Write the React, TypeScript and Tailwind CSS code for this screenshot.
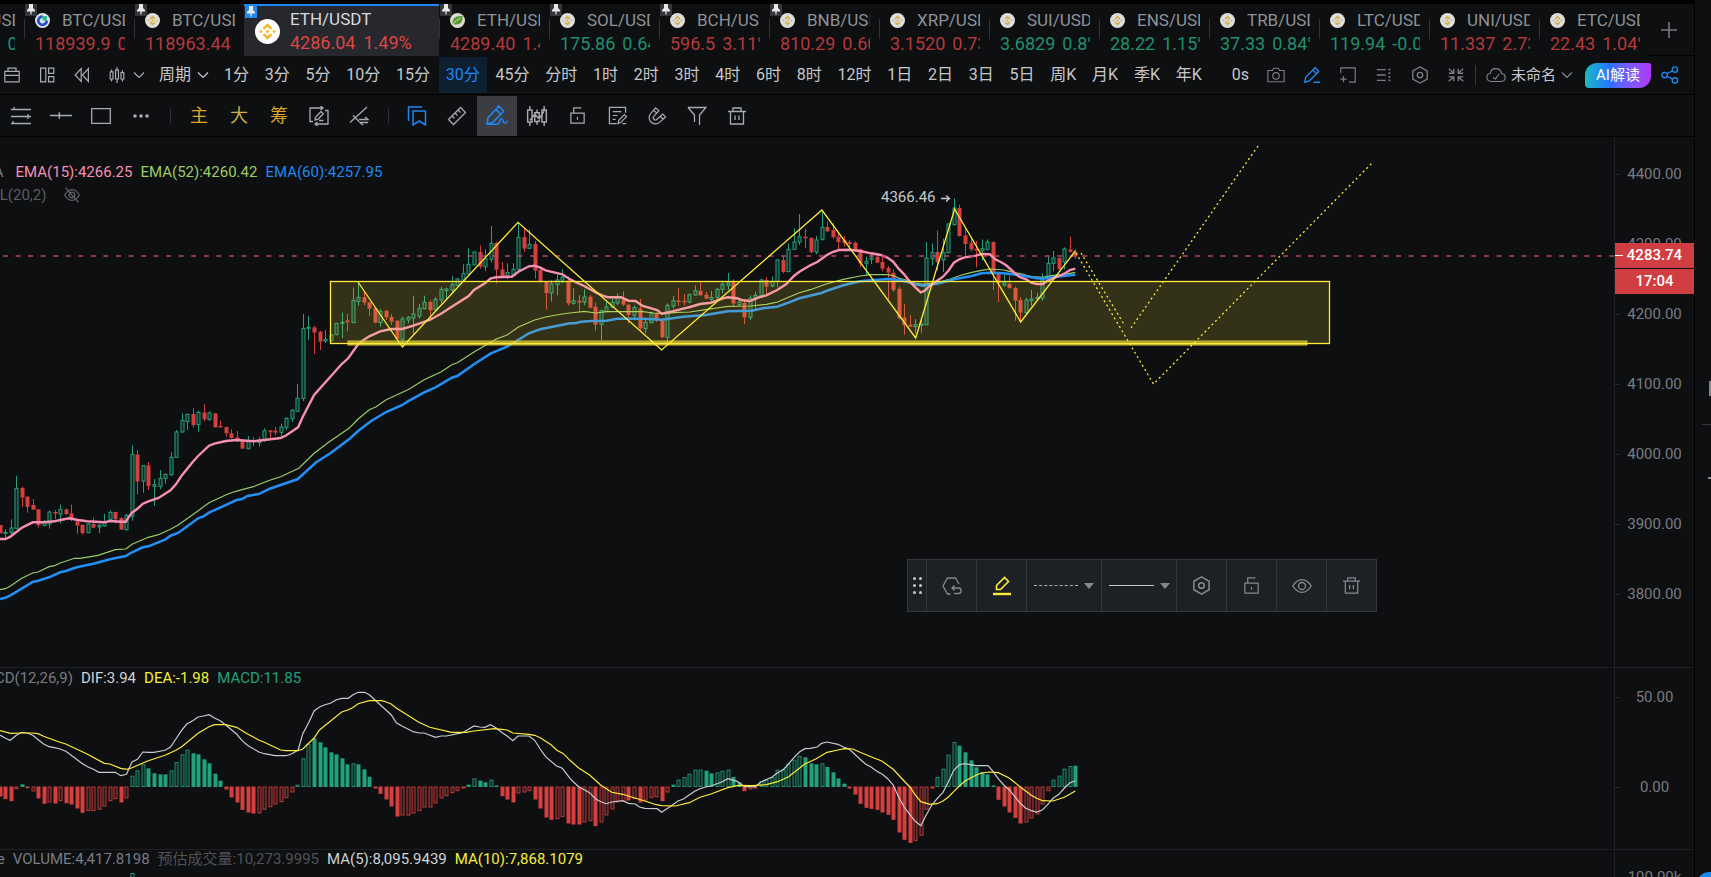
import clsx from 'clsx';
import type { ReactElement, ReactNode } from 'react';

type Tab = {
    name: string;
    price: string;
    change?: string;
    up?: boolean;
    pinned?: boolean;
    active?: boolean;
    exchange?: 'binance' | 'gate' | 'leaf';
};

const TABS: Tab[] = [
    { name: 'BTC/USDT', price: '118902.1', change: '0.52%', up: true },
    { name: 'BTC/USDT', price: '118939.9', change: '0.51%', pinned: true, exchange: 'gate' },
    { name: 'BTC/USDT', price: '118963.44', pinned: true },
    { name: 'ETH/USDT', price: '4286.04', change: '1.49%', pinned: true, active: true },
    { name: 'ETH/USDT', price: '4289.40', change: '1.47%', pinned: true, exchange: 'leaf' },
    { name: 'SOL/USDT', price: '175.86', change: '0.64%', up: true, pinned: true },
    { name: 'BCH/USDT', price: '596.5', change: '3.11%', pinned: true },
    { name: 'BNB/USDT', price: '810.29', change: '0.60%', pinned: true },
    { name: 'XRP/USDT', price: '3.1520', change: '0.73%' },
    { name: 'SUI/USDT', price: '3.6829', change: '0.8%', up: true },
    { name: 'ENS/USDT', price: '28.22', change: '1.15%', up: true },
    { name: 'TRB/USDT', price: '37.33', change: '0.84%', up: true },
    { name: 'LTC/USDT', price: '119.94', change: '-0.06%', up: true },
    { name: 'UNI/USDT', price: '11.337', change: '2.73%' },
    { name: 'ETC/USDT', price: '22.43', change: '1.04%' }
];

const FRAMES = [
    '1分', '3分', '5分', '10分', '15分', '30分', '45分', '分时', '1时', '2时', '3时', '4时',
    '6时', '8时', '12时', '1日', '2日', '3日', '5日', '周K', '月K', '季K', '年K'
];

const PRICE_TICKS = ['4400.00', '4300.00', '4200.00', '4100.00', '4000.00', '3900.00', '3800.00'];

const RED = '#d5403f';
const GREEN = '#22a27c';
const YELLOW = '#ffeb3b';

// Series are stored on a fine grid: GRID_X / GRID_Y steps per pixel.
const GRID_X = 2.751;
const GRID_Y = 3;
const BAR_START = -0.47;
const BAR_STEP = 5.517;

const barX = (i: number): number => Math.round(BAR_START + BAR_STEP * i);

// direction, high, body top, body bottom, low
const CANDLES: { top: number; rows: string }[] = [
    {
        top: 243,
        rows: `r 435 435 460 460,g 448 457 460 475,g 418 444 458 465,g 287 325 445 447,r 320 324 353 380,
r 348 350 381 398,r 357 375 389 390,r 387 388 436 443,g 420 428 436 438,g 392 396 432 446,
r 390 396 401 418,g 373 388 402 430,r 386 388 402 404,r 374 400 420 424,r 420 424 437 461,
r 433 434 459 464,g 430 432 458 459,r 413 432 443 444,g 430 436 441 459,g 402 425 438 440,
g 391 397 418 420,r 395 396 418 430,r 412 414 449 450,g 402 406 449 452,g 196 223 408 422,
r 210 223 305 342,g 255 257 303 338,r 246 256 318 330,g 297 314 319 378,g 270 295 319 327,
g 280 283 295 311,g 217 232 284 288,g 150 156 232 233,g 100 121 156 158,g 101 103 125 150,
r 84 102 135 143,g 92 97 134 155,r 73 97 118 125,g 94 99 118 123,r 99 100 142 143,
r 122 138 142 143,r 140 141 160 170,r 148 160 174 175,r 153 172 182 185,r 180 182 206 207,
g 168 184 206 208,r 171 181 186 198,g 170 180 188 200,g 145 152 180 186,r 150 151 157 175,
r 141 152 158 166,g 131 141 157 168,g 112 115 142 150,g 87 91 116 126,g 12 55 94 96,
g -198 -155 55 63`
    },
    {
        top: 3,
        rows: `g 528 562 565 600,r 558 562 578 642,r 572 575 605 630,g 570 598 603 609,g 583 585 602 602,
g 549 550 584 586,g 518 547 550 594,r 522 541 547 574,g 443 481 548 549,g 425 472 484 497,
r 456 471 488 495,r 485 487 506 528,r 503 504 548 550,g 507 514 548 560,r 510 512 532 540,
r 522 531 545 555,r 541 542 598 600,g 530 537 598 612,g 528 532 540 550,g 467 522 534 582,
g 492 505 528 536,g 467 487 506 508,r 481 486 511 540,g 471 478 509 515,g 440 448 480 490,
g 443 447 452 480,g 408 434 450 460,g 414 417 436 438,g 373 401 420 425,g 325 373 402 404,
g 334 336 375 376,r 316 336 380 386,g 328 356 380 393,g 258 310 358 367,r 305 309 389 430,
r 366 388 409 412,g 370 398 408 418,g 370 388 407 409,g 247 292 388 395,r 264 291 326 336,
g 268 313 325 326,r 303 312 392 416,r 388 390 426 428,r 425 426 459 509,g 421 432 459 485,
g 404 420 434 466,g 388 412 420 430,r 410 422 490 497`
    },
    {
        top: 43,
        rows: `g 325 362 370 374,r 345 362 368 396,g 328 351 366 376,r 345 350 383 385,r 368 380 434 452,
g 390 391 433 482,g 362 381 395 397,g 352 367 382 384,g 340 350 369 376,r 334 360 374 378,
r 371 374 405 430,g 377 383 406 418,r 357 385 445 452,g 420 427 446 460,g 395 401 428 430,
r 398 400 418 426,r 420 422 472 475,g 370 376 472 490,g 348 362 378 386,r 324 362 366 378,
r 342 362 367 376,g 340 344 366 370,g 316 332 345 347,r 305 332 346 348,r 336 344 356 358,
g 332 352 358 366,g 324 328 352 362,g 302 313 328 340,g 279 308 316 330,r 298 306 371 380,
g 355 366 374 378,r 358 369 412 432,g 346 355 412 420,g 335 346 352 386,g 296 300 347 350,
r 292 300 320 348,g 290 304 318 322,g 238 240 304 322,r 228 240 276 280,g 190 208 275 276,
g 145 186 208 210,g 102 170 186 195,r 147 170 175 204,r 172 174 216 220,g 168 180 216 223,
g 90 142 178 182,r 125 141 154 156,r 130 150 172 176,r 160 170 186 208,r 168 180 190 200,
r 180 186 192 204,r 184 188 210 212,r 206 208 250 262,g 230 244 250 285,g 222 234 238 252,
r 225 230 248 250,r 230 246 266 274,r 258 264 278 360,r 268 278 330 336,r 320 326 415 418,
r 372 412 436 464,r 405 434 440 441,g 417 434 440 460,g 416 432 436 460,g 186 234 434 436,
g 190 217 236 256,r 152 216 246 272,g 176 218 240 276,g 130 132 218 220,g 55 84 134 136,
r 74 84 168 170,r 142 166 192 232,r 174 188 208 214,r 183 206 212 262,g 178 206 212 242,
g 178 186 208 212,r 184 186 278 330,r 275 278 310 366,g 280 308 315 320,r 287 312 324 326,
r 320 324 362 422,r 352 360 398 425,g 354 360 398 402,g 330 357 362 378,g 338 352 356 358,
g 280 300 354 362,g 228 250 302 304,g 213 234 250 274,r 232 234 268 270,g 202 207 246 268,
r 170 208 216 217,r 208 215 230 236`
    }
];

// Signed bar height, "h" marks a hollow bar
const MACD_BARS = `-30 -38 -44 -8h 8 -5 -15h -36 -52 -48h -51 -44h -50 -54 -66 -79 -74h -74h -70h -60h -44h -38h -48
-36h 34h 50h 68h 56 41 38 38 50h 75h 98h 112h 101 98 83 71 40 19 -9 -33 -48 -70 -78 -81 -81h -70h -62h -54h -47h
-35h -18h 7h 86h 130h 146 134 119 104 98 86 68 71h 68 53 31 -6 -22 -39 -60 -90 -87h -87h -81h -74h -63h -63h -51h
-36h -29h -20h -14h -6 7 26h 19 14 22h 4 -29 -39 -48 -21h -18h -14h -39 -66 -93 -100 -98h -92h -111 -114 -114
-108h -104h -119 -108h -87h -69h -48h -46h -42 -38h -48 -42h -35h -32h -44 -18h 7 22h 30h 40h 52h 52h 49 41 44h
49h 52h 30 14 -14 -9h -4h 18h 22h 30h 52h 54h 70h 82h 93h 89 71 68 71h 60 44 26 10 -6 -24 -52 -64 -67 -70 -78 -85
-100 -138 -160 -169 -164h -148h -70h -6 30h 55h 97h 135h 124 104 80 59 45 38 4 -40 -60 -78 -94 -111 -108h -96h
-84h -54h -14h 22h 34h 55h 63h 64`;

type Trace = { left: number; top: number; points: string }[];

const EMA15: Trace = [
    {
        left: 0,
        top: 243,
        points: `0,477 15,477 29,470 44,457 60,443 90,427 120,427 150,424 166,420 190,415 215,420 240,424 287,427
302,423 332,425 346,425 353,413 363,398 378,386 393,371 408,364 436,354 469,331 484,313 499,288 530,246 545,228
575,197 590,191 621,183 651,180 697,184 727,180 772,174 788,166 820,142 833,110 864,45`
    },
    {
        left: 0,
        top: 3,
        points: `909,710 940,672 958,655 985,613 1000,600 1016,589 1046,574 1076,567 1107,567 1137,557 1182,540
1213,521 1243,500 1289,468 1304,450 1334,430 1349,416 1364,412 1408,410 1425,396 1455,379 1471,377 1486,383
1501,391 1547,403`
    },
    {
        left: 570,
        top: 43,
        points: `0,298 15,306 39,318 70,337 90,347 105,352 140,352 161,362 180,363 200,378 240,390 252,401 275,396
300,389 330,381 358,372 388,368 419,356 434,352 460,355 475,361 495,363 520,352 540,346 570,330 595,312 616,288
631,275 661,256 680,246 707,225 722,216 740,210 768,209 798,213 828,220 855,225 874,233 889,245 904,266 919,283
935,305 950,322 965,337 975,333 990,317 1010,302 1026,290 1041,272 1056,248 1071,238 1086,232 1117,227 1132,222
1155,223 1170,238 1185,246 1200,256 1223,279 1238,292 1255,298 1269,308 1284,312 1300,312 1314,302 1345,288
1360,281 1375,270 1390,266`
    }
];

const EMA52: Trace = [
    {
        left: 0,
        top: 243,
        points: `0,629 15,626 29,618 60,595 90,579 105,576 135,560 150,557 166,549 205,535 220,535 270,526 317,509
346,507 363,493 408,472 436,464 469,448 490,435 530,404 575,368 621,345 636,338 666,329 697,320 742,301 772,290
822,265 864,220 909,183 960,145 985,117 1016,89 1035,80 1061,60`
    },
    {
        left: 0,
        top: 3,
        points: `1125,748 1167,719 1213,696 1243,674 1258,668 1304,636 1364,598 1395,585 1425,562 1471,540 1501,531
1547,522`
    },
    {
        left: 570,
        top: 43,
        points: `0,399 40,394 70,399 100,395 200,395 230,399 260,401 297,397 330,396 373,389 404,384 434,379 495,378
540,373 571,366 601,352 631,338 661,329 707,311 752,298 798,288 828,284 874,284 889,287 904,294 935,303 950,309
970,313 1010,308 1041,299 1071,287 1102,278 1132,271 1155,267 1193,270 1208,274 1238,281 1269,290 1300,292
1330,286 1360,283 1390,277`
    }
];

const EMA60: Trace = [
    {
        left: 0,
        top: 243,
        points: `0,657 15,653 29,646 90,606 105,602 135,592 166,577 181,573 211,562 257,551 302,538 346,528 363,517
393,502 408,499 454,479 469,467 490,459 545,415 560,409 575,398 651,360 666,357 681,348 712,342 742,326 818,298
826,290 870,247 909,220 960,178 985,153 1020,124 1061,97 1107,75 1122,64`
    },
    {
        left: 0,
        top: 3,
        points: `1167,757 1198,742 1243,713 1258,708 1304,673 1349,641 1395,620 1425,600 1455,580 1486,568 1568,550`
    },
    {
        left: 570,
        top: 43,
        points: `15,430 30,425 60,423 100,422 130,416 200,416 252,419 312,410 373,405 434,394 500,392 530,385
570,380 601,368 631,355 692,339 707,332 752,316 798,304 828,301 874,297 904,300 919,303 950,313 970,317 1010,311
1056,298 1102,289 1132,280 1155,278 1193,280 1238,286 1284,295 1300,296 1330,291 1390,284`
    }
];

const DIF: Trace = [
    {
        left: 0,
        top: -8,
        points: `0,225 15,235 28,241 45,226 60,217 75,219 90,226 120,252 135,260 150,263 165,267 181,274 196,286
225,310 241,320 257,328 272,337 317,337 332,347 348,343 363,306 378,298 393,276 408,277 423,277 454,271 469,261
484,237 499,212 514,192 530,182 545,171 560,168 575,164 590,174 606,182 621,195 651,222 666,242 681,256 712,276
727,281 757,287 788,287 803,281 820,270 833,221 849,188 864,153 879,141 894,134 909,130 924,120 940,115 958,115
970,105 985,97 1003,97 1016,104 1046,134 1061,149 1076,164 1091,189 1107,199 1137,215 1152,219 1167,219 1198,232
1213,228 1228,228 1273,218 1304,198 1319,201 1334,202 1349,194 1364,203 1380,217 1395,228 1411,242 1425,228
1455,228 1471,241 1486,267 1501,290 1531,318 1547,325`
    },
    {
        left: 570,
        top: -8,
        points: `0,355 9,365 24,380 54,398 70,416 85,425 100,431 115,426 145,422 161,430 180,432 191,441 206,445
240,446 252,457 275,440 297,423 312,417 343,394 358,386 373,381 388,378 419,365 434,356 460,364 480,380 510,380
525,366 555,352 571,338 586,330 601,312 616,293 631,276 646,266 661,265 680,261 692,250 707,246 737,253 752,261
768,267 798,298 813,312 828,321 844,334 859,343 874,356 889,375 904,411 919,441 935,464 950,484 965,497 980,465
995,436 1010,416 1026,397 1041,365 1056,330 1071,314 1086,311 1117,317 1150,317 1162,332 1178,356 1193,375
1208,389 1238,429 1253,444 1269,452 1284,456 1300,449 1314,434 1329,415 1345,403 1360,384 1375,369 1390,362`
    }
];

const DEA: Trace = [
    {
        left: 0,
        top: -8,
        points: `0,212 29,220 60,219 90,219 105,221 120,229 150,241 165,247 181,252 241,283 287,310 302,312 332,325
350,328 363,323 408,302 454,286 469,278 484,271 499,261 545,220 575,200 590,194 621,194 651,202 681,222 697,231
712,240 727,247 772,270 788,272 820,272 833,267 864,234 879,210 940,156 955,151 970,143 985,131 1016,122 1050,122
1061,125 1076,132 1091,145 1152,187 1182,202 1243,217 1283,217 1304,213 1360,206 1380,208 1395,210 1411,219
1455,223 1471,226 1486,233 1501,244 1516,254 1531,270 1550,281`
    },
    {
        left: 570,
        top: -8,
        points: `0,301 24,324 54,345 85,376 115,397 145,403 176,413 206,423 237,434 252,437 290,438 328,428 358,412
388,402 434,383 464,376 500,377 540,374 571,365 601,350 631,325 646,312 676,297 707,277 737,270 755,266 778,267
798,277 828,290 859,304 889,328 919,363 935,381 950,405 965,425 990,433 1010,431 1026,423 1041,411 1056,394
1071,378 1086,364 1102,354 1117,346 1132,339 1155,336 1178,338 1208,354 1223,367 1238,380 1269,406 1284,415
1300,422 1329,423 1360,412 1390,393`
    }
];

const toPoints = (trace: Trace): string =>
    trace
        .flatMap(({ left, top, points }) =>
            points.split(/\s+/).map((pair) => {
                const [x, y] = pair.split(',').map(Number);
                return `${(left + x / GRID_X).toFixed(1)},${(top + y / GRID_Y).toFixed(1)}`;
            })
        )
        .join(' ');

const candles = CANDLES.flatMap(({ top, rows }) =>
    rows.split(/,\s*/).map((row) => {
        const [dir, ...values] = row.trim().split(' ');
        const [high, open, close, low] = values.map((v) => top + Number(v) / GRID_Y);
        return { up: dir === 'g', high, open, close, low };
    })
);

const macdBars = MACD_BARS.split(/\s+/).map((raw) => ({
    value: parseInt(raw, 10) / GRID_Y,
    hollow: raw.endsWith('h')
}));

const Icon = ({
    children,
    className = 'size-5',
    width = 1.3
}: {
    children: ReactNode;
    className?: string;
    width?: number;
}): ReactElement => (
    <svg
        viewBox="0 0 20 20"
        className={clsx('shrink-0', className)}
        fill="none"
        stroke="currentColor"
        strokeWidth={width}
        aria-hidden="true"
    >
        {children}
    </svg>
);

const Chevron = (): ReactElement => (
    <svg viewBox="0 0 12 12" className="size-3 shrink-0" fill="none" stroke="currentColor" aria-hidden="true">
        <path d="M1 3.5 6 8.5 11 3.5" strokeWidth="1.2" />
    </svg>
);

const BinanceMark = ({ large }: { large?: boolean }): ReactElement => (
    <svg viewBox="0 0 24 24" className={clsx('shrink-0', large ? 'size-[25px]' : 'size-[15px]')} aria-hidden="true">
        <circle cx="12" cy="12" r="12" fill={large ? '#ffffff' : '#dedede'} />
        <g fill={large ? '#f5b62a' : '#d9a93a'}>
            <path d="M12 4 16.6 8.6 14.9 10.3 12 7.4 9.1 10.3 7.4 8.6z" />
            <path d="M12 20 16.6 15.4 14.9 13.7 12 16.6 9.1 13.7 7.4 15.4z" />
            <path d="M5.7 10.3 7.4 12 5.7 13.7 4 12z" />
            <path d="M18.3 10.3 20 12 18.3 13.7 16.6 12z" />
            <path d="M12 10.1 13.9 12 12 13.9 10.1 12z" />
        </g>
    </svg>
);

const ExchangeMark = ({ tab }: { tab: Tab }): ReactElement => {
    if (tab.exchange === 'gate') {
        return (
            <svg viewBox="0 0 24 24" className="size-[15px] shrink-0" aria-hidden="true">
                <circle cx="12" cy="12" r="12" fill="#dfe4ee" />
                <path d="M12 5.5A6.7 6.7 0 1 0 18.7 12" fill="none" stroke="#2451c9" strokeWidth="4.4" />
                <path d="M12 5h7v7h-7z" fill="#22b889" />
            </svg>
        );
    }
    if (tab.exchange === 'leaf') {
        return (
            <svg viewBox="0 0 24 24" className="size-[15px] shrink-0" aria-hidden="true">
                <circle cx="12" cy="12" r="12" fill="#dcdcd4" />
                <path d="M4 18C3 9 9 4 20 5c1 10-5 15-14 13z" fill="#5b9a2f" />
                <path d="M4 19C8 13 12 11 17 8" fill="none" stroke="#dcdcd4" strokeWidth="1.6" />
            </svg>
        );
    }
    return <BinanceMark />;
};

const Pin = ({ active }: { active?: boolean }): ReactElement => (
    <span className={clsx('absolute left-px top-0 size-3', active ? 'bg-[#1e88f0]' : 'bg-[#34363a]')}>
        <svg viewBox="0 0 12 12" className="size-3" fill="#e8e8e8" aria-hidden="true">
            <path d="M4 0h4v4l2 2v1.5H6.6V10L6 11 5.4 10V7.5H2V6l2-2z" />
        </svg>
    </span>
);

const SymbolTab = ({ tab }: { tab: Tab }): ReactElement => {
    if (tab.active) {
        return (
            <button
                type="button"
                className="relative flex h-[52px] w-[195px] shrink-0 items-center gap-[10px] border-t-2 border-[#1e88f0] bg-[#26282d] pl-[11px] text-left"
            >
                <Pin active />
                <BinanceMark large />
                <span className="block">
                    <span className="block h-6 text-[17px] leading-6 text-[#d8dadd]">{tab.name}</span>
                    <span className="flex h-6 gap-2 text-[18px] leading-6 text-[#dc4646]">
                        <span>{tab.price}</span>
                        <span>{tab.change}</span>
                    </span>
                </span>
            </button>
        );
    }
    return (
        <button
            type="button"
            className="relative h-[52px] w-[110px] shrink-0 pl-[11px] pr-[9px] pt-1 text-left"
        >
            <span className="absolute left-0 top-[15px] h-5 w-px bg-[#303236]" />
            {tab.pinned && <Pin />}
            <span className="flex h-6 items-center gap-3 overflow-hidden whitespace-nowrap text-[17px] leading-6 text-[#8e9297]">
                <ExchangeMark tab={tab} />
                <span>{tab.name}</span>
            </span>
            <span
                className={clsx(
                    'flex h-6 gap-[7px] overflow-hidden whitespace-nowrap text-[18px] leading-6',
                    tab.up ? 'text-[#20906d]' : 'text-[#b4393b]'
                )}
            >
                <span>{tab.price}</span>
                {tab.change && <span>{tab.change}</span>}
            </span>
        </button>
    );
};

const TabStrip = (): ReactElement => (
    <nav className="-ml-[86px] flex h-[52px]">
        {TABS.map((tab, i) => (
            <SymbolTab key={i} tab={tab} />
        ))}
        <button
            type="button"
            aria-label="添加"
            className="flex flex-1 items-center justify-center border-b border-black pr-[6px] text-[#77797d]"
        >
            <Icon className="size-4" width={2}>
                <path d="M10 0v20M0 10h20" />
            </Icon>
        </button>
    </nav>
);

const FrameBar = (): ReactElement => (
    <div className="flex h-[38px] items-center text-base text-[#c6c8cb]">
        <div className="flex items-center gap-[19px] pl-1 text-[#a9abae]">
            <button type="button" aria-label="工具箱">
                <Icon className="size-4" width={1.5}>
                    <path d="M1 5.5h18v13H1zM1 10.500h18M5 5V1.500h10V5" />
                </Icon>
            </button>
            <button type="button" aria-label="布局">
                <Icon className="size-4" width={1.5}>
                    <path d="M2 1.500h6.500v17H2zM12 1.500h6.500v6.500H12zM12 12h6.500v6.500H12z" />
                </Icon>
            </button>
            <button type="button" aria-label="回放">
                <Icon className="size-4" width={1.5}>
                    <path d="M9 2v16L1.500 10zM18 2v16l-7.500-8z" />
                </Icon>
            </button>
            <button type="button" aria-label="图表类型" className="flex items-center gap-2">
                <Icon className="size-4" width={1.5}>
                    <path d="M1.500 6h3.500v9H1.500zM8.200 4h3.600v11H8.200zM15 7h3.500v8H15zM3.200 3v3M3.200 15v3M10 0v4M10 15v5M16.700 4v3M16.700 15v3" />
                </Icon>
                <Chevron />
            </button>
        </div>
        <button type="button" className="ml-[14px] flex items-center gap-[6px]">
            周期
            <Chevron />
        </button>
        <div className="ml-2 flex flex-1 justify-between">
            {FRAMES.map((frame) => (
                <button
                    key={frame}
                    type="button"
                    className={clsx(
                        'h-9 whitespace-nowrap px-[7px]',
                        frame === '30分' && 'bg-[#0e1f30] text-[#1e88f0]'
                    )}
                >
                    {frame}
                </button>
            ))}
        </div>
        <div className="ml-[17px] flex items-center gap-[18px] text-[#7b7d81]">
            <button type="button" className="pl-[6px] text-[#c6c8cb]">
                0s
            </button>
            <button type="button" aria-label="截图">
                <Icon className="size-[18px]">
                    <path d="M1 5h5l1.500-2.500h5L14 5h5v12.500H1z" />
                    <circle cx="10" cy="11" r="3.6" />
                </Icon>
            </button>
            <button type="button" aria-label="画线" className="text-[#1e88f0]">
                <Icon className="size-[18px]" width={1.5}>
                    <path d="M2 18l1-5.500L13.500 2l4 4L7 16.500zM11 4.500l4 4M11.500 18H19" />
                </Icon>
            </button>
            <button type="button" aria-label="新建窗口">
                <Icon className="size-[18px]">
                    <path d="M2 8V2h16v16h-7M5 11v7M1.500 14.500h7" />
                </Icon>
            </button>
            <button type="button" aria-label="列表">
                <Icon className="size-[18px]" width={1.5}>
                    <path d="M2 4h10M2 10h10M2 16h10" />
                    <path d="M16 3v2M16 7v2M16 11v2M16 15v2" strokeWidth="2" />
                </Icon>
            </button>
            <button type="button" aria-label="设置">
                <Icon className="size-[18px]" width={1.5}>
                    <path d="M10 1l8 4.500v9L10 19l-8-4.500v-9z" />
                    <circle cx="10" cy="10" r="3" />
                </Icon>
            </button>
            <button type="button" aria-label="退出全屏">
                <Icon className="size-[18px]" width={1.5}>
                    <path d="M2 3l5 4.500M7.500 3v5H2M18 3l-5 4.500M12.500 3v5H18M2 17l5-4.500M7.500 17v-5H2M18 17l-5-4.500M12.500 17v-5H18" />
                </Icon>
            </button>
        </div>
        <div className="ml-[10px] h-5 w-px bg-[#37393d]" />
        <button type="button" className="ml-[10px] flex items-center whitespace-nowrap text-[15px] text-[#85878b]">
            <Icon className="size-5" width={1.1}>
                <path d="M5.500 16.500C-.5 16-.5 9 4.300 8.500 5 2 14.500 2 15.500 8.500c5 .5 5 7.500-.5 8zM7 12.500l2.500 1.500L13 9" />
            </Icon>
            <span className="ml-[5px] mr-[5px] text-[#c6c8cb]">未命名</span>
            <Chevron />
        </button>
        <button
            type="button"
            className="ml-3 h-[25px] w-[66px] shrink-0 rounded-bl-[4px] rounded-br-[12px] rounded-tl-[12px] rounded-tr-[2px] bg-linear-to-r from-[#22b8c4] via-[#2f6bff] via-40% to-[#b035f5] text-[15px] leading-[25px] text-white"
        >
            AI解读
        </button>
        <button type="button" aria-label="分享" className="ml-[10px] mr-[15px] text-[#1e88f0]">
            <Icon className="size-[18px]" width={1.5}>
                <circle cx="4" cy="10" r="3" />
                <circle cx="15.5" cy="4" r="3" />
                <circle cx="15.5" cy="16" r="3" />
                <path d="M6.700 8.600 12.800 5.400M6.700 11.400l6.100 3.200" />
            </Icon>
        </button>
    </div>
);

const ToolButton = ({
    label,
    className,
    children
}: {
    label: string;
    className?: string;
    children: ReactNode;
}): ReactElement => (
    <button
        type="button"
        aria-label={label}
        className={clsx('flex size-10 shrink-0 items-center justify-center text-lg', className)}
    >
        {children}
    </button>
);

const ToolDivider = (): ReactElement => (
    <div className="flex w-[18px] justify-center">
        <div className="h-4 w-px bg-[#2f3135]" />
    </div>
);

const TRASH = <path d="M1 5.5h18M6 5V2h8v3M3.500 5.500V18h13V5.500M8 9.500v4.500M12 9.500v4.500" />;
const UNLOCK = <path d="M3 7.500h14V18H3zM6 7.500V2h8M10 11.500v3" />;

const DrawBar = (): ReactElement => (
    <div className="flex h-[43px] items-center border-y border-black pl-px text-[#a9abae]">
        <ToolButton label="线条">
            <Icon>
                <path d="M0 3.500h20M0 10.500h20M0 17.500h20M3 1v2.500M17 8v5M2 15v2.500" />
            </Icon>
        </ToolButton>
        <ToolButton label="水平线">
            <Icon className="size-[22px]">
                <path d="M0 9.500h20M8.500 6.500v6" />
            </Icon>
        </ToolButton>
        <ToolButton label="矩形">
            <Icon>
                <path d="M.7 2.700h18.600v14.600H.7z" />
            </Icon>
        </ToolButton>
        <ToolButton label="更多">
            <Icon>
                <g fill="currentColor" stroke="none">
                    <circle cx="4" cy="10" r="1.8" />
                    <circle cx="10" cy="10" r="1.8" />
                    <circle cx="16" cy="10" r="1.8" />
                </g>
            </Icon>
        </ToolButton>
        <ToolDivider />
        <ToolButton label="主" className="text-[#dda628]">主</ToolButton>
        <ToolButton label="大" className="text-[#cdb040]">大</ToolButton>
        <ToolButton label="筹" className="text-[#dda628]">筹</ToolButton>
        <ToolButton label="切换">
            <Icon>
                <path d="M4 15.500H1V2h13M11.500 0 14 2l-2.500 2M16 4.500h3V18H6M8.500 16 6 18l2.500 2" />
                <path d="M6 14l.7-3L12 5.500l2.300 2.300L9 13.300zM10 14.500h4.500" />
            </Icon>
        </ToolButton>
        <ToolButton label="切换画线">
            <Icon>
                <path d="M1 16.500 18 1M4 9.500l6 6M10 13.500h9l-3-2.500M19 16.500h-8l3 2.500" />
            </Icon>
        </ToolButton>
        <ToolDivider />
        <ToolButton label="收藏" className="text-[#1e88f0]">
            <Icon width={1.5}>
                <path d="M6 5h12.500v14l-6.200-4L6 19zM1.500 15V1H15" />
            </Icon>
        </ToolButton>
        <ToolButton label="测量">
            <Icon>
                <path d="M1.500 13.500 13.500 1.500l5 5-12 12zM5 10l2.500 2.500M8 7l2.500 2.500M11 4l2.500 2.500" />
            </Icon>
        </ToolButton>
        <ToolButton label="画笔" className="bg-[#3b3d43] text-[#1e88f0]">
            <Icon className="size-[22px]" width={1.4}>
                <path d="M1 17l.8-5.500L9 4l4.500 4.500L6 16zM9 4l2.500-3 4.500 4.500-2.500 3M1 17.500h9c3 0 2-5 4-5s1 4 3 4 2-1 2.500-2" />
            </Icon>
        </ToolButton>
        <ToolButton label="形态">
            <Icon className="size-[22px]">
                <path d="M1.500 4.500h4v11h-4zM8 7h4v8H8zM14.500 4.500h4v11h-4zM3.500 1v3.500M3.500 15.500V19M10 4v3M10 15v3M16.500 1v3.500M16.500 15.500V19M3.500 14 8 8.500l4 4 4.500-7" />
            </Icon>
        </ToolButton>
        <ToolButton label="锁定">
            <Icon className="size-[19px]">{UNLOCK}</Icon>
        </ToolButton>
        <ToolButton label="笔记">
            <Icon className="size-[19px]">
                <path d="M18.500 7V1.500h-17v17H9M5 6h9M5 10h5M5 14h3M10.500 18.500l.8-3.500 6-6 2.200 2.200-6 6zM15 18.500h4" />
            </Icon>
        </ToolButton>
        <ToolButton label="磁吸">
            <Icon className="size-[19px]">
                <path d="M8 2 3.200 7.500A6.600 6.600 0 0 0 12.500 17L18.500 11.500l-3-3-6 5.500A2.200 2.200 0 0 1 6.200 10.700L11.500 5zM6 4.500l3.200 3M13 11l3 3" />
            </Icon>
        </ToolButton>
        <ToolButton label="筛选">
            <Icon>
                <path d="M1 1.500h18L12.500 9v10M1 1.500 7.500 9v7" />
            </Icon>
        </ToolButton>
        <ToolButton label="删除">
            <Icon>{TRASH}</Icon>
        </ToolButton>
    </div>
);

const Legend = ({ items, className }: { items: [string, string][]; className: string }): ReactElement => (
    <div className={clsx('absolute left-0 flex gap-2 whitespace-nowrap text-[15px] leading-5', className)}>
        {items.map(([text, color]) => (
            <span key={text} className={color}>
                {text}
            </span>
        ))}
    </div>
);

const PriceChart = (): ReactElement => (
    <svg className="absolute inset-0 size-full" fill="none" aria-hidden="true">
        {candles.map((c, i) => {
            const x = barX(i);
            const height = Math.max(1, c.close - c.open);
            return (
                <g key={i}>
                    <path
                        d={`M${x + 0.5} ${c.high}V${c.open}M${x + 0.5} ${c.close}V${c.low}`}
                        stroke={c.up ? GREEN : RED}
                    />
                    {c.up ? (
                        <rect x={x - 1} y={c.open} width="3" height={height} stroke={GREEN} fill="#0f2a23" />
                    ) : (
                        <rect x={x - 1.5} y={c.open} width="4" height={height} fill={RED} />
                    )}
                </g>
            );
        })}
        <polyline points={toPoints(EMA52)} stroke="#9ccc65" strokeWidth="1.2" />
        <polyline points={toPoints(EMA60)} stroke="#2390f5" strokeWidth="2.5" />
        <polyline points={toPoints(EMA15)} stroke="#f78fb3" strokeWidth="2.4" />
        <line x1="3" y1="119" x2="100%" y2="119" stroke="#bb4560" strokeWidth="1.3" strokeDasharray="5 7.55" />

        <rect x="330.5" y="144.5" width="999" height="62" fill="#ffe83b" fillOpacity="0.16" stroke={YELLOW} strokeWidth="1.3" />
        <rect x="348" y="204" width="959" height="4" fill={YELLOW} fillOpacity="0.5" stroke="#d8c432" />
        <path d="M348 206.5h959" stroke={YELLOW} strokeWidth="1.6" />
        <polyline
            points="358,145 402.4,210 518,85.3 661.6,213 821.9,73 915.7,201 954.6,72 1020.7,185 1075.3,114"
            stroke={YELLOW}
            strokeWidth="1.3"
        />
        <g stroke={YELLOW} strokeWidth="1.3" strokeDasharray="2 3">
            <polyline points="1076,116 1153.5,247 1373,25" />
            <polyline points="1081,116 1125,189" />
            <polyline points="1131,191 1258,9" />
        </g>
        <text x="881" y="65" fill="#c6c8cb" className="text-[15px]">
            4366.46
        </text>
        <path d="M941 61.5h8M946 58.500l3.500 3-3.500 3" stroke="#c6c8cb" strokeWidth="1.3" />
    </svg>
);

const MacdChart = (): ReactElement => (
    <svg className="absolute inset-0 size-full" fill="none" aria-hidden="true">
        {macdBars.map(({ value, hollow }, i) => {
            const color = value > 0 ? GREEN : RED;
            const size = Math.max(1.5, Math.abs(value));
            const y = value > 0 ? 119 - size : 118.5;
            return hollow ? (
                <rect
                    key={i}
                    x={barX(i) - 1}
                    y={y + 0.5}
                    width="3"
                    height={Math.max(1, size - 1)}
                    stroke={color}
                    strokeOpacity="0.85"
                    fill={color}
                    fillOpacity="0.15"
                />
            ) : (
                <rect key={i} x={barX(i) - 1.5} y={y} width="4" height={size} fill={color} />
            );
        })}
        <polyline points={toPoints(DIF)} stroke="#c9cbce" strokeWidth="1.2" />
        <polyline points={toPoints(DEA)} stroke={YELLOW} strokeWidth="1.2" />
    </svg>
);

const FloatButton = ({
    label,
    wide,
    children
}: {
    label: string;
    wide?: boolean;
    children: ReactNode;
}): ReactElement => (
    <button
        type="button"
        aria-label={label}
        className={clsx(
            'flex h-full items-center justify-center gap-[6px] border-l border-[#34363a]',
            wide ? 'w-[75px]' : 'w-[50px]'
        )}
    >
        {children}
    </button>
);

const Caret = (): ReactElement => (
    <svg viewBox="0 0 10 6" className="h-[6px] w-[10px]" fill="currentColor" aria-hidden="true">
        <path d="M0 0h10L5 6z" />
    </svg>
);

const FloatingBar = (): ReactElement => (
    <div className="absolute left-[907px] top-[422px] flex h-[53px] items-center border border-[#34363a] bg-[#1d2126] text-[#85888d]">
        <div className="flex w-[18px] justify-center">
            <svg viewBox="0 0 9 17" className="h-[17px] w-[9px]" fill="#c6c8cb" aria-hidden="true">
                {[1.5, 8.5, 15.5].map((y) => (
                    <g key={y}>
                        <circle cx="1.5" cy={y} r="1.5" />
                        <circle cx="7.5" cy={y} r="1.5" />
                    </g>
                ))}
            </svg>
        </div>
        <FloatButton label="还原">
            <Icon>
                <path d="M8.500 18H5.500L1 10 5.500 2h8l3.500 6M12.500 9.500 10 12l2.500 2.500M10.500 12h6c3.500 0 3.500 5.500 0 5.500H12" />
            </Icon>
        </FloatButton>
        <FloatButton label="颜色">
            <svg viewBox="0 0 20 20" className="size-5" fill="none" stroke={YELLOW} aria-hidden="true">
                <path d="M4.500 13V9.500l8-8 4 4-8 8H4.500z" strokeWidth="1.6" />
                <path d="M1 18h18" strokeWidth="2.4" />
            </svg>
        </FloatButton>
        <FloatButton label="线型" wide>
            <span className="w-11 border-t border-dashed border-[#a9abae]" />
            <Caret />
        </FloatButton>
        <FloatButton label="线宽" wide>
            <span className="w-[45px] border-t border-[#c6c8cb]" />
            <Caret />
        </FloatButton>
        <FloatButton label="设置">
            <Icon className="size-[19px]" width={1.6}>
                <path d="M10 1l8 4.500v9L10 19l-8-4.500v-9z" />
                <circle cx="10" cy="10" r="3" />
            </Icon>
        </FloatButton>
        <FloatButton label="锁定">
            <Icon className="size-[19px]">{UNLOCK}</Icon>
        </FloatButton>
        <FloatButton label="隐藏">
            <Icon>
                <path d="M.8 10C6 1.500 14 1.500 19.200 10 14 18.500 6 18.500.8 10z" />
                <circle cx="10" cy="10" r="3.5" />
            </Icon>
        </FloatButton>
        <FloatButton label="删除">
            <Icon className="size-[19px]">{TRASH}</Icon>
        </FloatButton>
    </div>
);

const Axis = ({ children }: { children: ReactNode }): ReactElement => (
    <div className="relative w-20 shrink-0 overflow-hidden border-l border-[#1e2023] text-[15px] text-[#797c82]">
        {children}
    </div>
);

const Tick = ({ label, className }: { label: string; className: string }): ReactElement => (
    <div className={clsx('flex items-center', className)}>
        <span className="h-px w-1 bg-[#2a2c30]" />
        <span className="flex-1 pr-1 text-center">{label}</span>
    </div>
);

const App = (): ReactElement => (
    <div className="flex h-screen overflow-hidden bg-[#0d0f11] font-[Roboto,'Noto_Sans_CJK_SC',sans-serif]">
        <main className="flex min-w-0 flex-1 flex-col overflow-hidden">
            <div className="h-1 shrink-0 bg-black" />
            <TabStrip />
            <FrameBar />
            <DrawBar />

            <section className="flex min-h-0 flex-1">
                <div className="relative min-w-0 flex-1 overflow-hidden">
                    <PriceChart />
                    <Legend
                        className="-ml-7 top-[25px]"
                        items={[
                            ['EMA', 'pr-1 text-[#797c82]'],
                            ['EMA(15):4266.25', 'text-[#f78fb3]'],
                            ['EMA(52):4260.42', 'text-[#9ccc65]'],
                            ['EMA(60):4257.95', 'text-[#1e88f0]']
                        ]}
                    />
                    <div className="absolute -left-7 top-12 flex items-center gap-[18px] text-[15px] leading-5 text-[#5b5d61]">
                        BOLL(20,2)
                        <Icon className="size-4" width={1.6}>
                            <path d="M.8 10C6 1 14 1 19.200 10 14 19 6 19 .8 10zM2 1l16 18" />
                            <circle cx="10" cy="10" r="3.5" />
                        </Icon>
                    </div>
                    <FloatingBar />
                </div>
                <Axis>
                    <div className="pt-[2px]">
                        {PRICE_TICKS.map((label) => (
                            <Tick key={label} label={label} className="h-[70px]" />
                        ))}
                    </div>
                    <div className="absolute inset-x-0 top-[106px] text-[15px] font-medium text-white">
                        <div className="flex h-[25px] items-center bg-[#d03e41]">
                            <span className="h-px w-2 bg-white" />
                            <span className="flex-1 pr-2 text-center">4283.74</span>
                        </div>
                        <div className="mt-px h-[25px] bg-[#d03e41] text-center leading-[25px]">17:04</div>
                    </div>
                </Axis>
            </section>

            <section className="flex h-[182px] shrink-0 border-t border-[#1e2023]">
                <div className="relative min-w-0 flex-1 overflow-hidden">
                    <MacdChart />
                    <Legend
                        className="-ml-7 top-0"
                        items={[
                            ['MACD(12,26,9)', 'text-[#797c82]'],
                            ['DIF:3.94', 'text-[#d0d2d5]'],
                            ['DEA:-1.98', 'text-[#f5ee3a]'],
                            ['MACD:11.85', 'text-[#22a27c]']
                        ]}
                    />
                </div>
                <Axis>
                    <Tick label="50.00" className="h-[58px]" />
                    <Tick label="0.00" className="h-[122px]" />
                </Axis>
            </section>

            <section className="flex h-7 shrink-0 border-t border-[#1e2023]">
                <div className="relative min-w-0 flex-1 overflow-hidden">
                    <svg className="absolute inset-0 size-full" fill="none" aria-hidden="true">
                        <rect x={barX(24) - 1} y="23.5" width="3" height="10" stroke={GREEN} />
                    </svg>
                    <Legend
                        className="-ml-[46px] -top-px"
                        items={[
                            ['Volume', 'text-[#797c82]'],
                            ['VOLUME:4,417.8198', 'text-[#797c82]'],
                            ['预估成交量:10,273.9995', 'text-[#505256]'],
                            ['MA(5):8,095.9439', 'text-[#d0d2d5]'],
                            ['MA(10):7,868.1079', 'text-[#f5ee3a]']
                        ]}
                    />
                </div>
                <Axis>
                    <Tick label="100.00k" className="h-[54px]" />
                </Axis>
            </section>
        </main>

        <aside className="flex w-[17px] shrink-0 flex-col items-end overflow-hidden border-l border-black">
            <div className="mt-[381px] h-[15px] w-0.5 bg-[#85888d]" />
            <div className="mt-7 h-px w-[9px] bg-[#34363a]" />
            <div className="mt-[52px] h-0.5 w-[3px] bg-[#85888d]" />
            <button
                type="button"
                aria-label="客服"
                className="-mb-[27px] mt-auto h-8 w-[14px] shrink-0 rounded-tl-[12px] bg-[#1e88f0]"
            />
        </aside>
    </div>
);

export default App;
